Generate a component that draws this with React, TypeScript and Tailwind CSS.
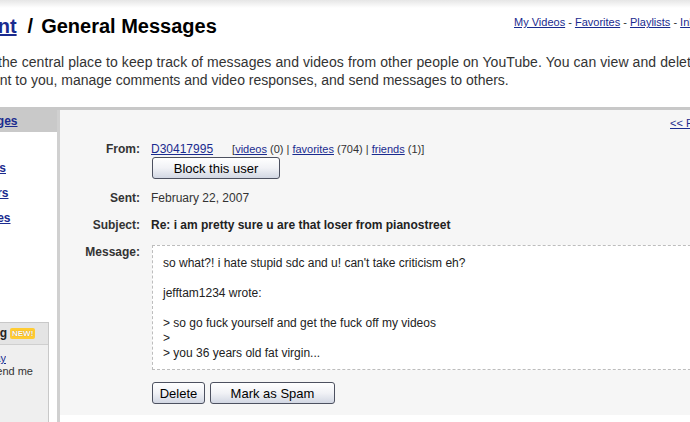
import React from "react";

const link = "text-[#1a2b8f] underline";

function Btn({ w, children }: { w: string; children: React.ReactNode }) {
  return (
    <button
      className={`${w} h-[22px] shrink-0 rounded-[3px] border border-[#4d5160] bg-linear-to-b from-white via-[#f1f2f6] to-[#d2d7e3] text-[13px] leading-none text-black font-['Liberation_Sans',Arial,sans-serif]`}
    >
      {children}
    </button>
  );
}

export default function App() {
  return (
    <div className="w-[690px] h-[422px] overflow-hidden bg-white text-[#333] font-['Liberation_Sans',Arial,sans-serif]">
      <div className="h-[8px] bg-linear-to-b from-[#e6e6e6] to-white" />

      <div className="flex items-start mt-[6px] whitespace-nowrap">
        <div className="w-[514px] shrink-0 text-[20px] leading-[24px] font-bold text-black">
          <div className="ml-[-96px] flex">
            <a className={link}>My Account</a>
            <span className="ml-[11px]">/</span>
            <span className="ml-[8px]">General Messages</span>
          </div>
        </div>
        <div className="mt-[2px] text-[11px] leading-[13px]">
          <a className={link}>My Videos</a> - <a className={link}>Favorites</a> -{" "}
          <a className={link}>Playlists</a> - <a className={link}>Inbox</a> -{" "}
          <a className={link}>Subscriptions</a>
        </div>
      </div>

      <div className="mt-[15px] text-[14px] leading-[18px] whitespace-nowrap">
        <div className="ml-[-47px] tracking-[0.08px]">
          This is the central place to keep track of messages and videos from other people on YouTube. You can view and delete messages
        </div>
        <div className="ml-[-15px]">
          sent to you, manage comments and video responses, and send messages to others.
        </div>
      </div>

      <div className="mt-[18px] h-[3px] bg-[#c8c8c8]" />

      <div className="flex h-[312px]">
        {/* sidebar */}
        <div className="w-[57px] shrink-0 flex flex-col">
          <div className="h-[22px] bg-[#c9c9c9] flex items-center text-[12px] leading-[15px] font-bold">
            <div className="w-[17.5px] flex justify-end overflow-hidden whitespace-nowrap">
              <a className={`${link} shrink-0`}>Messages</a>
            </div>
          </div>
          <div className="pt-[29px] flex flex-col gap-[10px] text-[12px] leading-[15px] font-bold">
            <div className="w-[6px] flex justify-end overflow-hidden whitespace-nowrap">
              <a className={`${link} shrink-0`}>Comments</a>
            </div>
            <div className="w-[8.5px] flex justify-end overflow-hidden whitespace-nowrap">
              <a className={`${link} shrink-0`}>Subscribers</a>
            </div>
            <div className="w-[10.5px] flex justify-end overflow-hidden whitespace-nowrap">
              <a className={`${link} shrink-0`}>Video Responses</a>
            </div>
          </div>
          <div className="mt-[96px] flex-1 w-[49px] border-t border-r border-[#c8c8c8] flex flex-col">
            <div className="h-[22px] bg-[#e4e4e4] border-b border-[#cfcfcf] flex items-center text-[12px] leading-[15px] font-bold text-[#222]">
              <div className="w-[7px] flex justify-end overflow-hidden whitespace-nowrap">
                <span className="shrink-0">Messaging</span>
              </div>
              <span className="ml-[3px] px-[2px] h-[11px] flex items-center rounded-[2px] bg-[#ffcc33] text-[8px] leading-none font-bold text-white [text-shadow:0_0_1px_#b07000]">
                NEW!
              </span>
            </div>
            <div className="flex-1 bg-[#efefef] pt-[7px] text-[11px] leading-[13px]">
              <div className="w-[6px] flex justify-end overflow-hidden whitespace-nowrap">
                <a className={`${link} shrink-0`}>Try it today</a>
              </div>
              <div className="w-[33px] flex justify-end overflow-hidden whitespace-nowrap">
                <span className="shrink-0">friends can send me</span>
              </div>
            </div>
          </div>
        </div>

        <div className="w-[3px] shrink-0 bg-[#d0d0d0]" />

        {/* main */}
        <div className="flex-1 flex flex-col">
          <div className="bg-[#f6f6f6] pt-[7px] pb-[11px]">
            <div className="pl-[610px] text-[11px] leading-[13px] whitespace-nowrap">
              <a className={link}>&lt;&lt; Prev</a>
            </div>

            <div className="mt-[12px] grid grid-cols-[80px_600px] gap-x-[11px] gap-y-[12px] text-[12px] leading-[15px]">
              <div className="text-right font-bold text-[#333]">From:</div>
              <div>
                <div className="whitespace-nowrap">
                  <a className={link}>D30417995</a>
                  <span className="ml-[19px] text-[11px]">
                    [<a className={link}>videos</a> (0) | <a className={link}>favorites</a> (704) |{" "}
                    <a className={link}>friends</a> (1)]
                  </span>
                </div>
                <div className="ml-[1px] flex">
                  <Btn w="w-[128px]">Block this user</Btn>
                </div>
              </div>

              <div className="text-right font-bold text-[#333]">Sent:</div>
              <div>February 22, 2007</div>

              <div className="text-right font-bold text-[#333]">Subject:</div>
              <div className="font-bold text-[#222]">Re: i am pretty sure u are that loser from pianostreet</div>

              <div className="text-right font-bold text-[#333]">Message:</div>
              <div className="ml-[1px] flex flex-col">
                <div className="border border-dashed border-[#bdbdbd] bg-white pt-[10px] pb-[8px] pl-[10px] text-[#222] whitespace-nowrap">
                  <div>so what?! i hate stupid sdc and u! can't take criticism eh?</div>
                  <div>&nbsp;</div>
                  <div>jefftam1234 wrote:</div>
                  <div>&nbsp;</div>
                  <div>&gt; so go fuck yourself and get the fuck off my videos</div>
                  <div>&gt;</div>
                  <div>&gt; you 36 years old fat virgin...</div>
                </div>
                <div className="mt-[12px] flex gap-[5px]">
                  <Btn w="w-[53px]">Delete</Btn>
                  <Btn w="w-[125px]">Mark as Spam</Btn>
                </div>
              </div>
            </div>
          </div>
        </div>
      </div>
    </div>
  );
}
